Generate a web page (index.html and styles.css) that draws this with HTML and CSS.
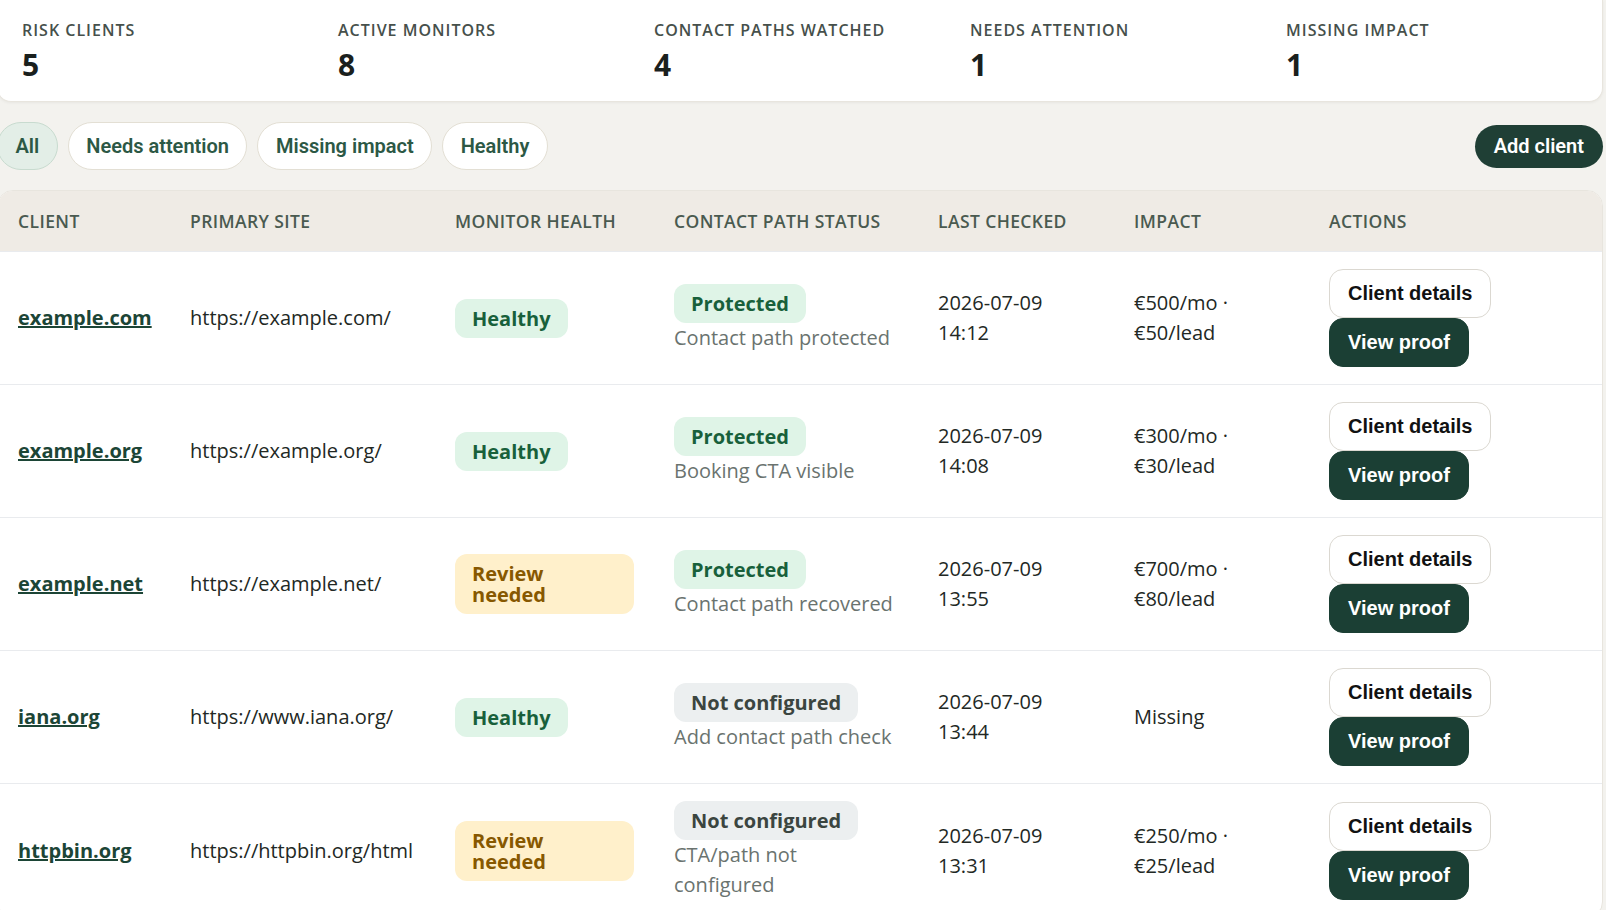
FILE: index.html
```
<!DOCTYPE html>
<html lang="en">
<head>
    <meta charset="UTF-8">
    <meta name="viewport" content="width=device-width, initial-scale=1.0">
    <title>Clients</title>
    <link rel="stylesheet" href="styles.css">
</head>
<body>
    <main class="page">
        <section class="stats">
            <div class="stat">
                <div class="stat-label">Risk clients</div>
                <div class="stat-value">5</div>
            </div>
            <div class="stat">
                <div class="stat-label">Active monitors</div>
                <div class="stat-value">8</div>
            </div>
            <div class="stat">
                <div class="stat-label">Contact paths watched</div>
                <div class="stat-value">4</div>
            </div>
            <div class="stat">
                <div class="stat-label">Needs attention</div>
                <div class="stat-value">1</div>
            </div>
            <div class="stat">
                <div class="stat-label">Missing impact</div>
                <div class="stat-value">1</div>
            </div>
        </section>

        <div class="toolbar">
            <div class="filters">
                <button class="filter active">All</button>
                <button class="filter">Needs attention</button>
                <button class="filter">Missing impact</button>
                <button class="filter">Healthy</button>
            </div>
            <button class="btn-add">Add client</button>
        </div>

        <div class="table-wrap">
            <table class="clients">
                <colgroup>
                    <col class="col-client">
                    <col class="col-site">
                    <col class="col-health">
                    <col class="col-path">
                    <col class="col-checked">
                    <col class="col-impact">
                    <col>
                </colgroup>
                <thead>
                    <tr>
                        <th>Client</th>
                        <th>Primary site</th>
                        <th>Monitor health</th>
                        <th>Contact path status</th>
                        <th>Last checked</th>
                        <th>Impact</th>
                        <th>Actions</th>
                    </tr>
                </thead>
                <tbody>
                    <tr>
                        <td><a class="client-link" href="#">example.com</a></td>
                        <td>https://example.com/</td>
                        <td><span class="pill ok">Healthy</span></td>
                        <td>
                            <span class="pill ok">Protected</span>
                            <div class="note">Contact path protected</div>
                        </td>
                        <td><span class="line">2026-07-09</span><span class="line">14:12</span></td>
                        <td>€500/mo · €50/lead</td>
                        <td>
                            <div class="actions">
                                <button class="btn-details">Client details</button>
                                <button class="btn-proof">View proof</button>
                            </div>
                        </td>
                    </tr>
                    <tr>
                        <td><a class="client-link" href="#">example.org</a></td>
                        <td>https://example.org/</td>
                        <td><span class="pill ok">Healthy</span></td>
                        <td>
                            <span class="pill ok">Protected</span>
                            <div class="note">Booking CTA visible</div>
                        </td>
                        <td><span class="line">2026-07-09</span><span class="line">14:08</span></td>
                        <td>€300/mo · €30/lead</td>
                        <td>
                            <div class="actions">
                                <button class="btn-details">Client details</button>
                                <button class="btn-proof">View proof</button>
                            </div>
                        </td>
                    </tr>
                    <tr>
                        <td><a class="client-link" href="#">example.net</a></td>
                        <td>https://example.net/</td>
                        <td><span class="pill warn">Review needed</span></td>
                        <td>
                            <span class="pill ok">Protected</span>
                            <div class="note">Contact path recovered</div>
                        </td>
                        <td><span class="line">2026-07-09</span><span class="line">13:55</span></td>
                        <td>€700/mo · €80/lead</td>
                        <td>
                            <div class="actions">
                                <button class="btn-details">Client details</button>
                                <button class="btn-proof">View proof</button>
                            </div>
                        </td>
                    </tr>
                    <tr>
                        <td><a class="client-link" href="#">iana.org</a></td>
                        <td>https://www.iana.org/</td>
                        <td><span class="pill ok">Healthy</span></td>
                        <td>
                            <span class="pill muted">Not configured</span>
                            <div class="note">Add contact path check</div>
                        </td>
                        <td><span class="line">2026-07-09</span><span class="line">13:44</span></td>
                        <td>Missing</td>
                        <td>
                            <div class="actions">
                                <button class="btn-details">Client details</button>
                                <button class="btn-proof">View proof</button>
                            </div>
                        </td>
                    </tr>
                    <tr>
                        <td><a class="client-link" href="#">httpbin.org</a></td>
                        <td>https://httpbin.org/html</td>
                        <td><span class="pill warn">Review needed</span></td>
                        <td>
                            <span class="pill muted">Not configured</span>
                            <div class="note">CTA/path not configured</div>
                        </td>
                        <td><span class="line">2026-07-09</span><span class="line">13:31</span></td>
                        <td>€250/mo · €25/lead</td>
                        <td>
                            <div class="actions">
                                <button class="btn-details">Client details</button>
                                <button class="btn-proof">View proof</button>
                            </div>
                        </td>
                    </tr>
                </tbody>
            </table>
        </div>
    </main>
</body>
</html>
```

FILE: styles.css
```
html, body {
    overflow: hidden;
}
body {
    font-family: 'Segoe UI', 'Open Sans', sans-serif;
    font-size: 20px;
    line-height: 1.5;
    color: #222824;
    margin: 0;
    background-color: #f3f2ee;
}
.page {
    width: 1606px;
    margin-left: -3px;
}
.stats {
    display: grid;
    grid-template-columns: repeat(5, 1fr);
    gap: 24px;
    padding: 18.5px 24px 19.5px;
    background-color: white;
    border: 1px solid #e8e5de;
    border-top: none;
    border-radius: 0 0 14px 14px;
    box-shadow: 0 1px 3px rgba(0,0,0,0.05);
}
.stat-label {
    font-size: 16px;
    line-height: 22px;
    font-weight: 600;
    letter-spacing: 1px;
    text-transform: uppercase;
    color: #46504b;
}
.stat-value {
    margin-top: 7px;
    font-size: 30px;
    line-height: 34px;
    font-weight: 700;
    color: #1a201d;
}
.toolbar {
    display: flex;
    align-items: center;
    justify-content: space-between;
    margin-top: 20px;
}
.filters {
    display: flex;
    gap: 10px;
}
button {
    cursor: pointer;
}
.filter, .btn-add {
    font-family: Roboto, 'Segoe UI', sans-serif;
    font-size: 20px;
    font-weight: 600;
}
.filter {
    line-height: 30px;
    padding: 8px 17.5px;
    color: #2c5845;
    background-color: white;
    border: 1px solid #e3dfd4;
    border-radius: 999px;
}
.filter.active {
    background-color: #e3eee7;
    border-color: #c8dbcf;
}
.btn-add {
    line-height: 23px;
    padding: 10px 19px;
    color: white;
    background-color: #1f3f35;
    border: none;
    border-radius: 999px;
}
.table-wrap {
    margin-top: 20px;
    background-color: white;
    border: 1px solid #e8e5de;
    border-radius: 16px;
    overflow: hidden;
}
.clients {
    width: 100%;
    border-collapse: collapse;
    table-layout: fixed;
}
.col-client { width: 172px; }
.col-site { width: 265px; }
.col-health { width: 219px; }
.col-path { width: 264px; }
.col-checked { width: 196px; }
.col-impact { width: 195px; }
.clients th {
    height: 60px;
    padding: 0 20px;
    text-align: left;
    font-size: 17.5px;
    font-weight: 600;
    letter-spacing: 0.4px;
    text-transform: uppercase;
    color: #4a5a50;
    background-color: #efebe5;
}
.clients td {
    padding: 17px 20px;
    vertical-align: middle;
    border-top: 1px solid #e9ebee;
}
.client-link {
    font-weight: 700;
    color: #1c4536;
}
.pill {
    display: inline-block;
    padding: 9px 17px;
    line-height: 21px;
    font-weight: 700;
    border-radius: 12px;
}
.pill.ok {
    color: #18603b;
    background-color: #dff4e7;
}
.pill.warn {
    color: #875800;
    background-color: #fff0cb;
}
.pill.muted {
    color: #3b4540;
    background-color: #eceff0;
}
.note {
    color: #6a736f;
}
.line {
    display: block;
}
.actions {
    display: flex;
    flex-wrap: wrap;
    column-gap: 8px;
}
.btn-details, .btn-proof {
    font-family: 'Liberation Sans', Arial, sans-serif;
    font-size: 20px;
    font-weight: 700;
    line-height: 23px;
    padding: 12px 18px;
    border-radius: 14px;
}
.btn-details {
    color: #111;
    background-color: white;
    border: 1px solid #dbd8d1;
}
.btn-proof {
    color: white;
    background-color: #1b3f34;
    border: 1px solid #1b3f34;
}
```
